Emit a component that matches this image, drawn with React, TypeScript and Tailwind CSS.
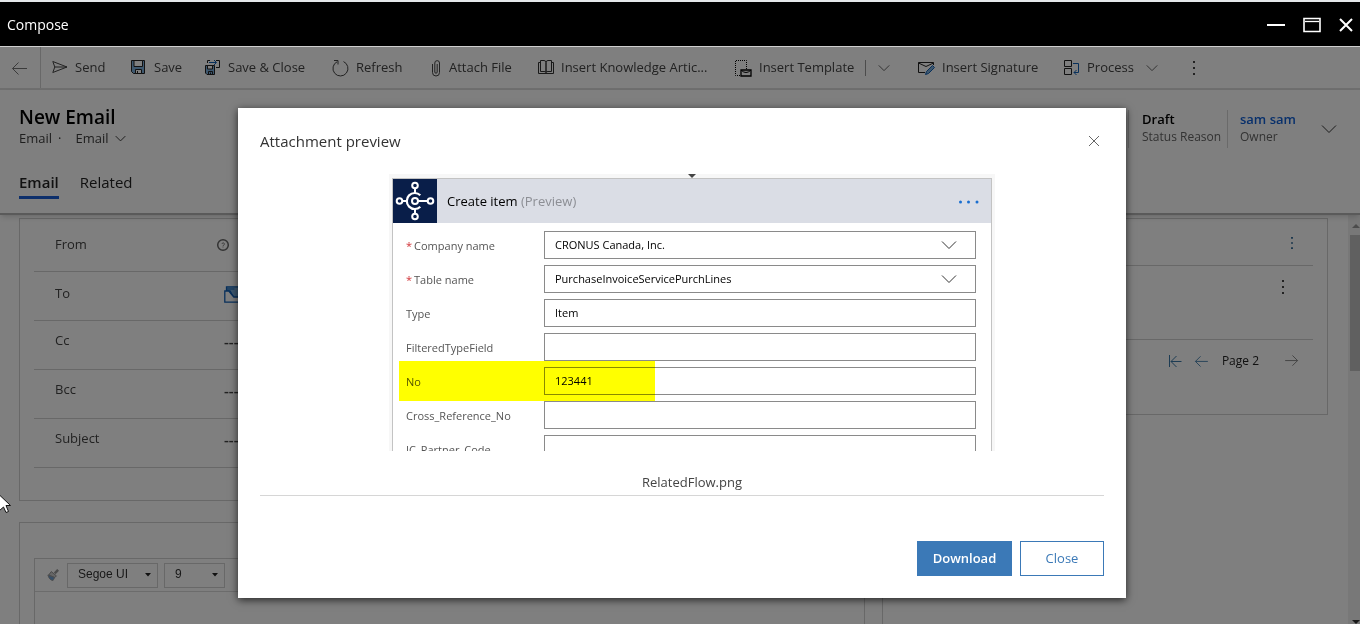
import type { ReactNode } from 'react';

interface IconProps {
  className?: string;
}

interface Command {
  label: string;
  icon: ReactNode;
  width: string;
}

interface FlowField {
  label: string;
  value: string;
  required?: boolean;
  select?: boolean;
  highlight?: boolean;
}

function ChevronDown({ className }: IconProps) {
  return (
    <svg viewBox="0 0 16 10" fill="none" stroke="currentColor" className={className}>
      <path d="M1 1.5l7 7 7-7" vectorEffect="non-scaling-stroke" />
    </svg>
  );
}

function ArrowLeft({ className }: IconProps) {
  return (
    <svg viewBox="0 0 16 14" fill="none" stroke="currentColor" className={className}>
      <path d="M1.5 7.5H16M7.5 1.5l-6 6 6 6" />
    </svg>
  );
}

function MoreVertical({ className }: IconProps) {
  return (
    <svg viewBox="0 0 4 14" fill="currentColor" className={className}>
      <path d="M1 0h2v2H1zM1 6h2v2H1zM1 12h2v2H1z" />
    </svg>
  );
}

function SendIcon() {
  return (
    <svg viewBox="0 0 16 16" fill="none" stroke="#444" className="w-4 h-4">
      <path d="M.8 1.500l14.200 5.500L.8 12.500l2-5.500zM2.800 7H15" />
    </svg>
  );
}

function SaveIcon() {
  return (
    <svg viewBox="0 0 16 16" fill="none" stroke="#222" className="w-4 h-4">
      <path d="M.5 .5h13v13h-11l-2-2z" fill="#7cb0de" />
      <path d="M3 .5h8.500v6H3z" fill="#fff" />
      <path d="M4.500 13.500v-4h6v4z" fill="#fff" />
      <path d="M6.500 11v2.500" />
    </svg>
  );
}

function SaveCloseIcon() {
  return (
    <svg viewBox="0 0 16 18" fill="none" stroke="#222" className="w-4 h-[18px]">
      <path d="M2.500 4V1.500H5M11 1.500h3.500v7H11" />
      <path d="M4 3.500h7M9 1l2.500 2.500L9 6" stroke="#1160b7" />
      <path d="M.5 6.500h9v9H2L.5 14z" fill="#7cb0de" />
      <path d="M2.500 6.500h5v3.500h-5z" fill="#fff" />
      <path d="M3.500 15.500v-3h4v3M5.500 13.500v2" />
    </svg>
  );
}

function RefreshIcon() {
  return (
    <svg viewBox="0 0 17 17" fill="none" stroke="#444" className="w-[17px] h-[17px]">
      <path d="M5.200 1.700A7.500 7.500 0 1 0 11.500 1.600" />
      <path d="M2 .5h4v4" />
    </svg>
  );
}

function AttachIcon() {
  return (
    <svg viewBox="-1 0 12 17" fill="none" stroke="#444" className="w-3 h-[17px]">
      <path d="M1.500 4v8.500a3.500 3.500 0 0 0 7 0V3a2.300 2.300 0 0 0-4.700 0v9a1.200 1.200 0 0 0 2.400 0V4" />
    </svg>
  );
}

function BookIcon() {
  return (
    <svg viewBox="0 0 16 16" fill="none" stroke="#333" className="w-4 h-4">
      <path d="M2.500 .5h3.500q2 0 2 2v10q0-1-2-1H2.500zM13.500 .5H10q-2 0-2 2v10q0-1 2-1h3.500z" />
      <path d="M2.500 2.500h-2v11h15v-11h-2" />
    </svg>
  );
}

function TemplateIcon() {
  return (
    <svg viewBox="0 0 17 17" fill="none" stroke="#000" className="w-[17px] h-[17px]">
      <path d="M5 15.500H.5V.5h11V9" strokeDasharray="1 1" />
      <path d="M6 10h10v6H6z" strokeWidth="1.300" />
      <path d="M6.500 10.500q4.500 4 9 0" />
    </svg>
  );
}

function SignatureIcon() {
  return (
    <svg viewBox="0 0 17 15" fill="none" stroke="#222" className="w-[17px] h-[15px]">
      <path d="M7 11.500H.5v-10h15V4M.5 2L8 5.500 15.500 2" />
      <path d="M8.500 10.500l6-6 2 2-6 6-3 1z" fill="#7cb0de" stroke="#1160b7" />
    </svg>
  );
}

function ProcessIcon() {
  return (
    <svg viewBox="0 0 16 16" fill="none" stroke="#222" className="w-4 h-4">
      <path d="M.5 .5h7v6h-7zM.5 8.500h7v6h-7z" />
      <path d="M9 3.500h5.500v9H10M12.500 10L10 12.500l2.500 2.500" stroke="#1160b7" />
    </svg>
  );
}

function BusinessCentralLogo() {
  return (
    <svg viewBox="0 0 44 44" fill="none" stroke="#fff" strokeWidth="2" className="w-11 h-11 bg-[#091e49] shrink-0">
      <circle cx="22" cy="22" r="3" />
      <circle cx="22" cy="6.500" r="2.800" />
      <circle cx="22" cy="37.500" r="2.800" />
      <circle cx="6.500" cy="22" r="2.800" />
      <circle cx="37.500" cy="22" r="2.800" />
      <path d="M27.300 16.200a8 8 0 1 0 0 11.600" strokeWidth="2.200" />
      <path d="M22 9.500v4.500M22 30v4.500M9.500 22H14M25 22h9.500" />
    </svg>
  );
}

const COMMANDS: Command[] = [
  { label: 'Send', icon: <SendIcon />, width: 'w-[79px]' },
  { label: 'Save', icon: <SaveIcon />, width: 'w-[74px]' },
  { label: 'Save & Close', icon: <SaveCloseIcon />, width: 'w-[127px]' },
  { label: 'Refresh', icon: <RefreshIcon />, width: 'w-[98px]' },
  { label: 'Attach File', icon: <AttachIcon />, width: 'w-[108px]' },
  { label: 'Insert Knowledge Artic...', icon: <BookIcon />, width: 'w-[197px]' },
  { label: 'Insert Template', icon: <TemplateIcon />, width: 'w-[129px]' },
];

const FLOW_FIELDS: FlowField[] = [
  { label: 'Company name', value: 'CRONUS Canada, Inc.', required: true, select: true },
  { label: 'Table name', value: 'PurchaseInvoiceServicePurchLines', required: true, select: true },
  { label: 'Type', value: 'Item' },
  { label: 'FilteredTypeField', value: '' },
  { label: 'No', value: '123441', highlight: true },
  { label: 'Cross_Reference_No', value: '' },
  { label: 'IC_Partner_Code', value: '' },
];

function TitleBar() {
  return (
    <div className="h-[47px] shrink-0 flex items-center justify-between pl-[7px] pr-[7px] pt-0.5 bg-black text-white border-t-2 border-b border-t-[#e4e7ea] border-b-[#cfcfcf]">
      <h1 className="text-sm">Compose</h1>
      <div className="flex items-center gap-[18px]">
        <button aria-label="Minimize">
          <svg viewBox="0 0 18 18" className="w-[18px] h-[18px]">
            <path d="M0 9h18" stroke="#fff" strokeWidth="2" />
          </svg>
        </button>
        <button aria-label="Maximize">
          <svg viewBox="0 0 18 16" fill="none" stroke="#fff" className="w-[18px] h-4">
            <path d="M1 1.500h16v13H1z" strokeWidth="1.600" />
            <path d="M2 4.500h14" strokeWidth="1.300" />
          </svg>
        </button>
        <button aria-label="Close window">
          <svg viewBox="0 0 14 14" className="w-[14px] h-[14px]">
            <path d="M1 1l12 12M13 1L1 13" stroke="#fff" strokeWidth="2" />
          </svg>
        </button>
      </div>
    </div>
  );
}

function CommandBar() {
  return (
    <div className="h-[43px] shrink-0 flex items-center border-b-2 border-[#dcdcdc] text-[13px] text-[#444] whitespace-nowrap">
      <button aria-label="Back" className="w-10 h-full shrink-0 flex items-center pl-[11px] text-[#777]">
        <ArrowLeft className="w-4 h-[14px]" />
      </button>
      <div className="h-full border-l border-[#d0d0d0] mr-[11px]" />
      {COMMANDS.map(c => (
        <button key={c.label} className={`h-full shrink-0 flex items-center gap-[7px] pt-px ${c.width}`}>
          {c.icon}
          <span>{c.label}</span>
        </button>
      ))}
      <div className="h-4 ml-px border-l border-[#999] mr-3" />
      <button aria-label="More templates" className="mr-7 text-[#666]">
        <ChevronDown className="w-3 h-2" />
      </button>
      <button className="shrink-0 h-full w-[146px] flex items-center gap-[7px] pt-px">
        <SignatureIcon />
        <span>Insert Signature</span>
      </button>
      <button className="shrink-0 h-full w-[82px] flex items-center gap-[7px] pt-px">
        <ProcessIcon />
        <span>Process</span>
      </button>
      <button aria-label="More processes" className="mr-[34px] text-[#666]">
        <ChevronDown className="w-3 h-2" />
      </button>
      <button aria-label="More commands">
        <MoreVertical className="w-1 h-[14px]" />
      </button>
    </div>
  );
}

function RecordHeader() {
  return (
    <header className="relative h-[125px] shrink-0 flex justify-between pl-[19px] pr-[23px] border-b-2 border-[#b4b4b4] shadow-md">
      <div>
        <h2 className="mt-[15px] text-[19px] leading-6 font-semibold text-black">New Email</h2>
        <div className="flex items-center text-[13px] leading-[18px] text-[#3c3c3c]">
          <span>Email</span>
          <span className="ml-1.5 mr-3.5">·</span>
          <button className="flex items-center gap-1.5">
            Email
            <ChevronDown className="w-[11px] h-[7px]" />
          </button>
        </div>
        <nav className="mt-6 flex gap-[21px] text-[15px] leading-[22px] text-[#222]">
          <a href="#email" className="h-[28px] font-semibold border-b-[3px] border-[#1b5fd6]">Email</a>
          <a href="#related">Related</a>
        </nav>
      </div>
      <div className="mt-5 h-[38px] flex text-xs leading-[18px]">
        <div className="w-[99px] pl-[13px] border-l border-[#d4d4d4] whitespace-nowrap">
          <p className="text-[13px] font-semibold text-black">Draft</p>
          <p className="text-[#666]">Status Reason</p>
        </div>
        <div className="w-[94px] pl-3 border-l border-[#d4d4d4] whitespace-nowrap">
          <a href="#owner" className="block text-[13px] font-semibold text-[#1160d7]">sam sam</a>
          <p className="text-[#666]">Owner</p>
        </div>
        <button aria-label="Expand header" className="text-[#333]">
          <ChevronDown className="w-4 h-[10px]" />
        </button>
      </div>
    </header>
  );
}

function FormRow({ label, children }: { label: string; children: ReactNode }) {
  return (
    <div className="h-[49px] flex items-center pb-2 pl-[21px] border-b border-[#d0d0d0] text-[13px] text-[#444] first:pb-1 nth-2:pb-1">
      <span className="w-[160px]">{label}</span>
      {children}
    </div>
  );
}

function EmptyValue() {
  return <span className="ml-[9px] text-[15px] leading-[18px] font-semibold">---</span>;
}

function EmailForm() {
  return (
    <section className="h-[283px] shrink-0 px-[14px] pt-1 border border-[#d0d0d0]">
      <FormRow label="From">
        <span className="flex items-center gap-2">
          <svg viewBox="0 0 14 14" fill="none" stroke="#666" className="ml-px w-[14px] h-[14px]">
            <circle cx="7" cy="7" r="5.300" strokeWidth="1.500" />
            <path d="M6 6a1.200 1.200 0 1 1 1.500 1.200L7 8M7 8.500v1" strokeWidth=".8" />
          </svg>
          <svg viewBox="0 0 16 16" fill="#1160b7" className="w-4 h-4">
            <circle cx="8" cy="4" r="3.500" />
            <path d="M0 15c0-3 3-6 8-6s8 3 8 6z" />
          </svg>
        </span>
      </FormRow>
      <FormRow label="To">
        <svg viewBox="0 0 17 17" fill="#7cb0de" stroke="#1160b7" className="ml-[9px] w-[17px] h-[17px]">
          <path d="M2.500 5V.8h13.500V12h-6L6 5z" strokeWidth="1.300" />
          <path d="M2.500 3h8" />
          <path d="M.8 5h4l5 6h6.500v5.200H.8z" fill="#fff" strokeWidth="1.300" />
        </svg>
      </FormRow>
      <FormRow label="Cc"><EmptyValue /></FormRow>
      <FormRow label="Bcc"><EmptyValue /></FormRow>
      <FormRow label="Subject"><EmptyValue /></FormRow>
    </section>
  );
}

function EditorSelect({ label, value, width }: { label: string; value: string; width: string }) {
  return (
    <span className={`relative h-[25px] ${width}`}>
      <select
        aria-label={label}
        defaultValue={value}
        className="appearance-none block w-full h-full pl-[10px] pb-0.5 border border-[#d0d0d0] font-['Liberation_Sans',Arial,sans-serif] text-xs text-[#333]"
      >
        <option>{value}</option>
      </select>
      <svg viewBox="0 0 6 4" fill="#222" className="absolute right-[7px] top-[10px] w-[6px] h-1 pointer-events-none">
        <path d="M0 0h6L3 3.500z" />
      </svg>
    </span>
  );
}

function Editor() {
  return (
    <section className="mt-[21px] flex-1 min-h-0 px-[14px] pt-[35px] border border-b-0 border-[#d0d0d0] flex flex-col">
      <div className="flex-1 border-l border-t border-[#d0d0d0]">
        <div className="h-[33px] flex items-center gap-1.5 pl-3 border-b border-[#d8d8d8]">
          <button aria-label="Format painter" className="mr-0.5">
            <svg viewBox="0 0 14 14" className="w-3 h-3">
              <path d="M13 1L9 5" stroke="#999" strokeWidth="3" />
              <path d="M5 3l6 5-2 2-7-3z" fill="#ccc" stroke="#888" />
              <path d="M1 7l8 3-2 3.500c-3 0-5-3-6-6.500z" fill="#6f9fd0" stroke="#999" />
            </svg>
          </button>
          <EditorSelect label="Font" value="Segoe UI" width="w-[91px]" />
          <EditorSelect label="Font size" value="9" width="w-[61px]" />
        </div>
      </div>
    </section>
  );
}

function AttachmentsPanel() {
  return (
    <aside className="w-[446px] shrink-0 border-l border-[#d0d0d0]">
      <div className="h-[197px] pr-[14px] border border-l-0 border-[#d0d0d0] text-[#444]">
        <div className="h-[47px] flex items-center justify-end pr-[19px] pt-0.5 border-b border-[#d0d0d0]">
          <button aria-label="Section options" className="text-[#1c5a8c]">
            <MoreVertical className="w-1 h-3" />
          </button>
        </div>
        <div className="h-[74px] flex justify-end pt-[14px] pr-7 border-b border-[#d0d0d0]">
          <button aria-label="Grid options" className="h-[14px]">
            <MoreVertical className="w-1 h-[14px]" />
          </button>
        </div>
        <div className="h-[41px] flex items-center justify-end pr-[14px] text-xs text-[#222]">
          <button aria-label="First page" className="flex text-[#3b78a8]">
            <svg viewBox="0 0 14 14" fill="none" stroke="currentColor" className="w-[14px] h-[14px]">
              <path d="M1.500 1v12M3 7.500h10.500M8.500 2L3 7.500l5.500 5.500" />
            </svg>
          </button>
          <button aria-label="Previous page" className="ml-3 text-[#3b78a8]">
            <ArrowLeft className="w-[14px] h-3" />
          </button>
          <span className="ml-[14px] mr-[26px]">Page 2</span>
          <button aria-label="Next page" className="text-[#777]">
            <ArrowLeft className="w-[14px] h-3 rotate-180" />
          </button>
        </div>
      </div>
    </aside>
  );
}

function ScrollTrack() {
  return (
    <div className="w-3 shrink-0 flex flex-col pl-0.5 bg-[#f1f1f1]">
      <svg viewBox="0 0 10 20" fill="#999" className="shrink-0 w-[10px] h-5">
        <path d="M6 9l4 4H2z" />
      </svg>
      <div className="h-[136px] bg-[#c1c1c1]" />
      <svg viewBox="0 0 10 8" fill="#333" className="w-[10px] h-2 mt-auto">
        <path d="M2 4h8L6 8z" />
      </svg>
    </div>
  );
}

function FlowFieldRow({ field }: { field: FlowField }) {
  const id = `flow-${field.label}`;
  const box = 'w-full h-7 px-[10px] border border-[#8a8a8a] bg-white text-black text-[11px]';

  return (
    <div className="relative h-[34px] flex items-start pl-[13px] pr-[15px]">
      <label htmlFor={id} className="w-[138px] shrink-0 leading-[30px] text-[11px] text-[#555]">
        {field.required && <span className="mr-0.5 text-[#d13438]">*</span>}
        {field.label}
      </label>
      {field.select ? (
        <span className="relative flex-1 h-7">
          <select id={id} defaultValue={field.value} className={`appearance-none ${box}`}>
            <option>{field.value}</option>
          </select>
          <ChevronDown className="absolute right-[19px] top-[9px] w-4 h-[10px] text-[#333] pointer-events-none" />
        </span>
      ) : (
        <input id={id} defaultValue={field.value} className={`flex-1 pb-0.5 ${box}`} />
      )}
      {field.highlight && (
        <div className="absolute -top-1.5 left-1.5 w-[256px] h-10 bg-[#ffff00] mix-blend-multiply pointer-events-none" />
      )}
    </div>
  );
}

function FlowPreview() {
  return (
    <div className="w-[606px] h-[277px] overflow-hidden bg-[#f7f7f7] px-[3px]">
      <svg viewBox="0 0 8 4" fill="#444" className="mx-auto w-2 h-1">
        <path d="M0 0h8L4 4z" />
      </svg>
      <div className="h-[300px] bg-white border border-[#c3c3c3]">
        <div className="h-11 flex items-center bg-[#dadde5] text-[13px] text-black">
          <BusinessCentralLogo />
          <span className="ml-[10px] pt-0.5">
            Create item <span className="text-[#8c8e94]">(Preview)</span>
          </span>
          <button aria-label="Action menu" className="ml-auto mr-3 pt-0.5">
            <svg viewBox="0 0 20 4" fill="#1a6fd0" className="w-5 h-1">
              <circle cx="1.500" cy="2" r="1.500" />
              <circle cx="9.500" cy="2" r="1.500" />
              <circle cx="18" cy="2" r="1.500" />
            </svg>
          </button>
        </div>
        <div className="pt-2">
          {FLOW_FIELDS.map(f => <FlowFieldRow key={f.label} field={f} />)}
        </div>
      </div>
    </div>
  );
}

function AttachmentPreviewModal() {
  return (
    <div
      role="dialog"
      aria-label="Attachment preview"
      className="w-[888px] h-[490px] flex flex-col bg-white px-[22px] pb-[22px] shadow-[0_2px_8px_rgba(0,0,0,0.7)]"
    >
      <div className="h-[66px] shrink-0 flex items-center justify-between pr-1">
        <h2 className="pt-px text-[15px] text-[#333]">Attachment preview</h2>
        <button aria-label="Close preview">
          <svg viewBox="0 0 12 12" stroke="#666" className="w-3 h-3">
            <path d="M1 1l10 10M11 1L1 11" />
          </svg>
        </button>
      </div>
      <div className="flex flex-col items-center pl-5 border-b border-[#d6d6d6]">
        <FlowPreview />
        <p className="mt-5 mb-0.5 text-[13px] leading-[22px] text-[#444]">RelatedFlow.png</p>
      </div>
      <div className="mt-auto flex justify-end gap-2 text-[13px]">
        <button className="w-[95px] h-[35px] bg-[#3b79b7] text-white font-semibold">Download</button>
        <button className="w-[84px] h-[35px] border border-[#3b79b7] text-[#3b79b7]">Close</button>
      </div>
    </div>
  );
}

export default function App() {
  return (
    <div className="relative h-screen flex flex-col overflow-hidden bg-white font-['Open_Sans','Segoe_UI',sans-serif]">
      <TitleBar />
      <div className="relative flex-1 min-h-0 flex flex-col">
        <CommandBar />
        <RecordHeader />
        <main className="flex-1 min-h-0 flex">
          <div className="flex-1 min-w-0 flex gap-[17px] pt-[3px] pl-[19px] pr-5">
            <div className="flex-1 min-w-0 flex flex-col">
              <EmailForm />
              <Editor />
            </div>
            <AttachmentsPanel />
          </div>
          <ScrollTrack />
        </main>

        <div className="absolute inset-0 flex items-start justify-center pt-[61px] pl-1 bg-black/50">
          <AttachmentPreviewModal />
        </div>
      </div>

      <svg viewBox="0 0 12 20" fill="#fff" stroke="#111" className="absolute left-0 top-[494px] w-3 h-5">
        <path d="M-1 .5l11.500 11H6l2.500 6-2.500 1L3.500 13-1 17z" />
      </svg>
    </div>
  );
}
